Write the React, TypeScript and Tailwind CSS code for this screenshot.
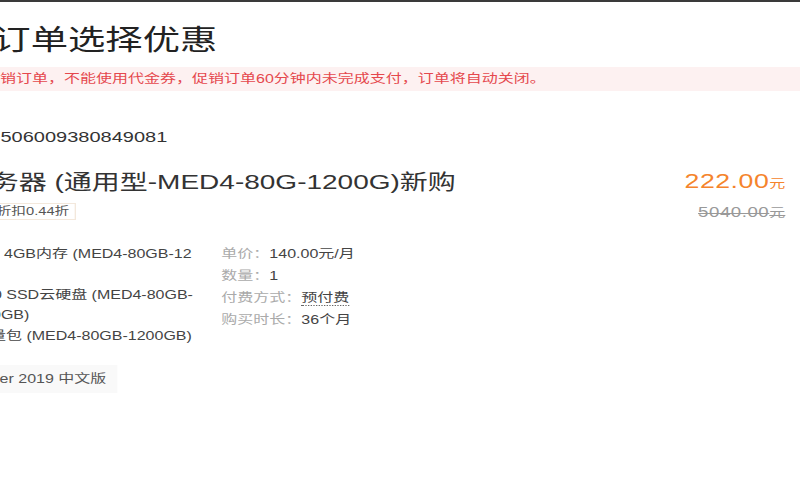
import React from "react";

const FONT = '"Liberation Sans", "Noto Sans CJK SC", sans-serif';

export default function App() {
  return (
    <div
      className="w-[800px] h-[500px] overflow-hidden bg-white border-t-2 border-[#3a3a3a]"
      style={{ fontFamily: FONT }}
    >
      <div className="w-[600px] origin-top-left scale-x-[1.3333]">
        <div className="-ml-[33px] w-[622px] pt-[21px]">
          {/* Heading */}
          <h1 className="text-[28px] leading-[36px] text-[#222] font-normal whitespace-nowrap">
            为订单选择优惠
          </h1>

          {/* Notice */}
          <div className="mt-[8px] -mr-[30px] h-[24px] bg-[#fdf1f1] flex items-center pl-[21px] text-[12px] text-[#e5484d] whitespace-nowrap">
            促销订单，不能使用代金券，促销订单60分钟内未完成支付，订单将自动关闭。
          </div>

          {/* Order number */}
          <div className="mt-[36px] text-[15px] leading-[20px] text-[#333] whitespace-nowrap">
            2019506009380849081
          </div>

          {/* Product row */}
          <div className="mt-[18px] flex justify-between items-start">
            <div className="flex flex-col items-start">
              <div className="pt-[3px] pl-[5px] text-[21px] leading-[28px] text-[#333] whitespace-nowrap">
                服务器 (通用型-MED4-80G-1200G)新购
              </div>
              <div className="mt-[7px] ml-[3.5px] h-[17px] px-[4px] border border-[#f3e8dc] text-[11px] leading-[15px] text-[#555] whitespace-nowrap">
                限时折扣0.44折
              </div>
            </div>
            <div className="pt-[2px] flex flex-col items-end">
              <div className="leading-[28px] whitespace-nowrap text-[#f5842c]">
                <span className="text-[20px] tracking-[0.4px]">222.00</span>
                <span className="text-[12px]">元</span>
              </div>
              <div className="mt-[4px] leading-[20px] whitespace-nowrap text-[#999] line-through">
                <span className="text-[14px] tracking-[0.4px]">5040.00</span>
                <span className="text-[12px]">元</span>
              </div>
            </div>
          </div>

          {/* Config */}
          <div className="mt-[20px] ml-[33px] flex items-start text-[12px] text-[#444]">
            <div className="w-[166px] shrink-0 pt-[1px] leading-[20px] whitespace-nowrap">
              <div>
                <div className="-ml-[19px]">2核 4GB内存 (MED4-80GB-12</div>
                <div className="-ml-[36px]">00GB)</div>
              </div>
              <div className="mt-[1px]">
                <div className="-ml-[12px]">40 SSD云硬盘 (MED4-80GB-</div>
                <div className="-ml-[26px]">1200GB)</div>
              </div>
              <div className="mt-[1px]">
                <div className="-ml-[19.5px]">流量包 (MED4-80GB-1200GB)</div>
              </div>
              <div className="mt-[19px] -ml-[85px] inline-block bg-[#f9f9f9] pl-[8px] pr-[8px] py-[4px] text-[#555]">
                Windows Server 2019 中文版
              </div>
            </div>
            <div className="leading-[22px] whitespace-nowrap">
              <div>
                <span className="text-[#aaa]">单价：</span>
                <span className="text-[#444]">140.00元/月</span>
              </div>
              <div>
                <span className="text-[#aaa]">数量：</span>
                <span className="text-[#444]">1</span>
              </div>
              <div>
                <span className="text-[#aaa]">付费方式：</span>
                <span className="text-[#444] border-b border-dotted border-[#666]">预付费</span>
              </div>
              <div>
                <span className="text-[#aaa]">购买时长：</span>
                <span className="text-[#444]">36个月</span>
              </div>
            </div>
          </div>
        </div>
      </div>
    </div>
  );
}
